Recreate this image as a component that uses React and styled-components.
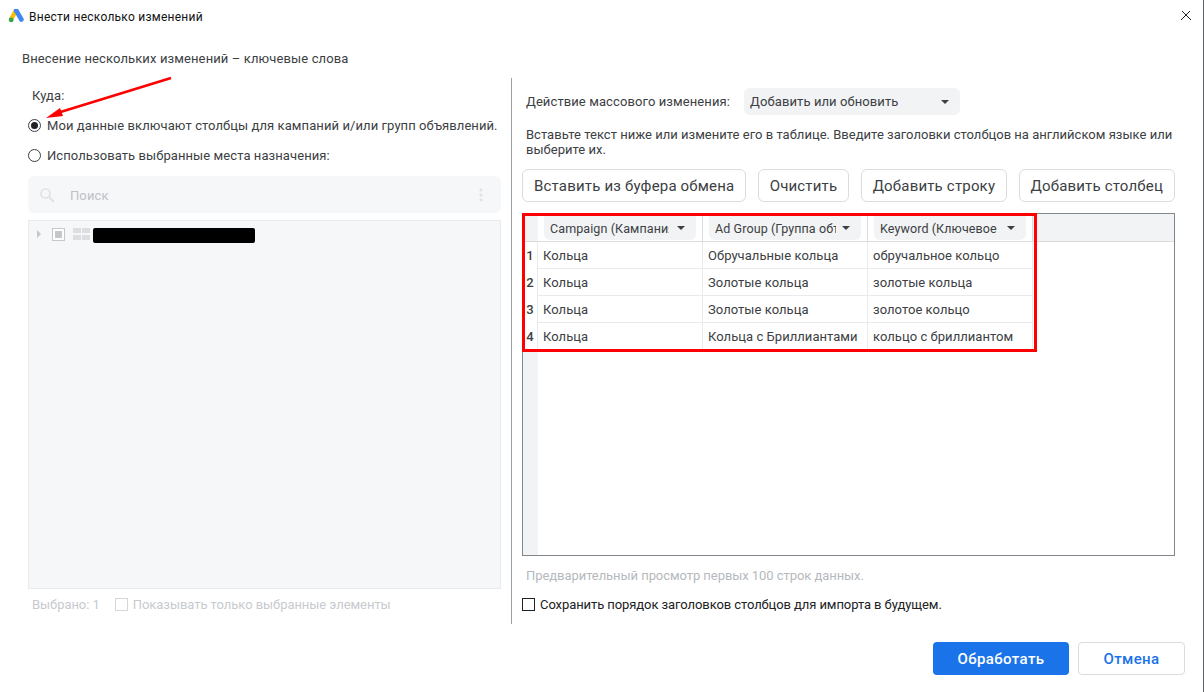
import React from "react";
import styled, { createGlobalStyle } from "styled-components";

const Global = createGlobalStyle`
  html, body { margin: 0; padding: 0; background: #fff; }
  body { font-family: Roboto, "Noto Sans", sans-serif; font-size: 13px; letter-spacing: 0.1px; color: #3c4043; }
  * { box-sizing: border-box; }
`;

const Page = styled.div`
  position: relative;
  width: 1204px;
  height: 692px;
  overflow: hidden;
  background: #fff;
  display: flex;
  flex-direction: column;
  border-right: 1px solid #5f6368;
`;

const TitleBar = styled.div`
  height: 34px;
  display: flex;
  align-items: center;
  padding: 0 11px 0 8px;
  gap: 5px;
  flex: none;
`;
const TitleText = styled.div`
  flex: 1;
  font-size: 12px;
  letter-spacing: 0.25px;
  color: #111;
`;
const Heading = styled.div`
  height: 20px;
  line-height: 20px;
  margin: 15px 0 9px 22px;
  letter-spacing: 0.12px;
  flex: none;
`;
const Columns = styled.div`
  display: flex;
  height: 546px;
  flex: none;
  padding-left: 28px;
`;
const LeftCol = styled.div`
  width: 484px;
  padding-right: 10px;
  border-right: 1px solid #9aa0a6;
  display: flex;
  flex-direction: column;
`;
const RightCol = styled.div`
  flex: 1;
  padding: 0 28px 0 10px;
  display: flex;
  flex-direction: column;
`;
const ToLabel = styled.div`
  margin: 10px 0 0 4px;
  height: 16px;
  line-height: 16px;
`;
const RadioRow = styled.div`
  display: flex;
  align-items: center;
  gap: 6px;
  height: 20px;
  margin-top: ${(p) => p.$mt}px;
  letter-spacing: 0.085px;
  white-space: nowrap;
`;
const Radio = styled.span`
  width: 13px;
  height: 13px;
  border: 1px solid #3c4043;
  border-radius: 50%;
  background: #fff;
  display: flex;
  align-items: center;
  justify-content: center;
  &::after {
    content: "";
    width: 7px;
    height: 7px;
    border-radius: 50%;
    background: ${(p) => (p.$on ? "#202124" : "transparent")};
  }
`;
const SearchBox = styled.div`
  height: 37px;
  margin-top: 11px;
  background: #f6f7f9;
  border-radius: 6px;
  display: flex;
  align-items: center;
  padding: 0 18px 0 11px;
  color: #bdc1c6;
`;
const SearchLabel = styled.span`
  flex: 1;
  margin-left: 15px;
  padding-top: 2px;
`;
const Tree = styled.div`
  height: 369px;
  margin-top: 7px;
  background: #f6f7f9;
  border: 1px solid #e8eaed;
  display: flex;
  align-items: flex-start;
  padding: 7px 0 0 8px;
  gap: 8px;
`;
const Caret = styled.span`
  width: 0;
  height: 0;
  margin-top: 2px;
  border-left: 4px solid #c4c7cc;
  border-top: 4px solid transparent;
  border-bottom: 4px solid transparent;
`;
const TreeCheck = styled.span`
  width: 13px;
  height: 13px;
  border: 1px solid #c4c7cc;
  background: #fff;
  display: flex;
  align-items: center;
  justify-content: center;
  margin-left: 3px;
  &::after {
    content: "";
    width: 7px;
    height: 7px;
    background: #c4c7cc;
  }
`;
const Redacted = styled.span`
  width: 162px;
  height: 15px;
  margin-left: -5px;
  background: #000;
  border-radius: 2px;
`;
const Selected = styled.div`
  display: flex;
  align-items: center;
  margin: 7px 0 0 4px;
  height: 16px;
  color: #c7cacf;
  letter-spacing: -0.05px;
`;
const SmallCheck = styled.span`
  width: 13px;
  height: 13px;
  margin: 0 5px 0 ${(p) => p.$ml}px;
  border: 1px solid ${(p) => p.$c};
  flex: none;
`;
const ActionRow = styled.div`
  display: flex;
  align-items: center;
  margin: 10px 0 0 4px;
  height: 27px;
`;
const Select = styled.div`
  width: 216px;
  height: 27px;
  margin-left: 14px;
  background: #f1f3f4;
  border-radius: 6px;
  display: flex;
  align-items: center;
  justify-content: space-between;
  padding: 0 11px 0 6px;
`;
const Arrow = styled.span`
  width: 0;
  height: 0;
  flex: none;
  border-top: 4px solid #3c4043;
  border-left: 4px solid transparent;
  border-right: 4px solid transparent;
`;
const Help = styled.div`
  margin: 12px 0 0 4px;
  line-height: 15px;
  letter-spacing: 0.02px;
`;
const Buttons = styled.div`
  display: flex;
  justify-content: space-between;
  margin-top: 12px;
`;
const Button = styled.button`
  height: 33px;
  padding: 0 11px;
  border: 1px solid #dadce0;
  border-radius: 6px;
  background: #fff;
  font: 15px Roboto, sans-serif;
  letter-spacing: 0.18px;
  color: #3c4043;
  white-space: nowrap;
`;
const Sheet = styled.div`
  margin-top: 11px;
  height: 343px;
  border: 1px solid #80868b;
  display: flex;
  flex-direction: column;
`;
const SheetHead = styled.div`
  height: 28px;
  flex: none;
  display: flex;
  background: #f1f3f4;
  border-bottom: 1px solid #dadce0;
  padding-left: 15px;
`;
const HeadCell = styled.div`
  width: 165px;
  background: #fff;
  border-right: 1px solid #dadce0;
  padding: 0 6px;
`;
const HeadSelect = styled.div`
  height: 26px;
  background: #f1f3f4;
  border-radius: 0 0 6px 6px;
  display: flex;
  align-items: center;
  justify-content: space-between;
  padding: 2px 11px 0 6px;
`;
const HeadText = styled.span`
  width: ${(p) => p.$w}px;
  overflow: hidden;
  white-space: nowrap;
  font-size: 12.5px;
`;
const SheetBody = styled.div`
  flex: 1;
  display: flex;
  flex-direction: column;
  background: linear-gradient(90deg, #f1f3f4 15px, #fff 15px);
`;
const Row = styled.div`
  display: flex;
  height: 27px;
`;
const RowNum = styled.div`
  width: 15px;
  line-height: 27px;
  text-align: center;
  font-weight: 500;
  font-size: 13px;
  background: #fff;
  border-right: 1px solid #e8eaed;
`;
const Cell = styled.div`
  width: 165px;
  padding-left: 5px;
  line-height: 28px;
  letter-spacing: 0.05px;
  border-right: 1px solid #e8eaed;
  border-bottom: 1px solid #e8eaed;
  white-space: nowrap;
  background: #fff;
`;
const Preview = styled.div`
  margin: 12px 0 0 4px;
  height: 16px;
  line-height: 16px;
  color: #b5b9be;
  letter-spacing: -0.06px;
`;
const SaveRow = styled.div`
  display: flex;
  align-items: center;
  margin-top: 12px;
  height: 16px;
  color: #202124;
  letter-spacing: -0.08px;
`;
const Footer = styled.div`
  display: flex;
  justify-content: flex-end;
  gap: 9px;
  padding: 18px 18px 0 0;
`;
const Primary = styled.button`
  width: 136px;
  height: 33px;
  border: 0;
  border-radius: 4px;
  background: #1a73e8;
  color: #fff;
  font: 500 15px Roboto, sans-serif;
  letter-spacing: 0.4px;
`;
const Cancel = styled.button`
  width: 107px;
  height: 33px;
  border: 1px solid #dadce0;
  border-radius: 4px;
  background: #fff;
  color: #1a73e8;
  font: 500 15px Roboto, sans-serif;
  letter-spacing: 0.4px;
`;
const Highlight = styled.div`
  position: absolute;
  left: 522px;
  top: 213px;
  width: 515px;
  height: 139px;
  border: 3px solid #f00;
  pointer-events: none;
`;
const Pointer = styled.svg`
  position: absolute;
  left: 40px;
  top: 70px;
  pointer-events: none;
`;

const rows = [
  ["Кольца", "Обручальные кольца", "обручальное кольцо"],
  ["Кольца", "Золотые кольца", "золотые кольца"],
  ["Кольца", "Золотые кольца", "золотое кольцо"],
  ["Кольца", "Кольца с Бриллиантами", "кольцо с бриллиантом"],
];

export default function App() {
  return (
    <Page>
      <Global />
      <TitleBar>
        <svg width="16" height="16" viewBox="0 1.5 16 16">
          <path d="M8 3 3 12" stroke="#fbbc04" strokeWidth="4.4" strokeLinecap="round" fill="none" />
          <path d="M8.2 3 13.4 12" stroke="#4285f4" strokeWidth="4.6" strokeLinecap="round" fill="none" />
          <circle cx="3.2" cy="12.4" r="2.4" fill="#34a853" />
        </svg>
        <TitleText>Внести несколько изменений</TitleText>
        <svg width="12" height="12" viewBox="0 2 12 12">
          <path d="M1 1 11 11M11 1 1 11" stroke="#222" strokeWidth="1" fill="none" />
        </svg>
      </TitleBar>
      <Heading>Внесение нескольких изменений – ключевые слова</Heading>
      <Columns>
        <LeftCol>
          <ToLabel>Куда:</ToLabel>
          <RadioRow $mt={11}>
            <Radio $on />
            Мои данные включают столбцы для кампаний и/или групп объявлений.
          </RadioRow>
          <RadioRow $mt={10}>
            <Radio />
            Использовать выбранные места назначения:
          </RadioRow>
          <SearchBox>
            <svg width="16" height="16" viewBox="0 0 16 16">
              <circle cx="6.5" cy="6.5" r="4.5" stroke="#dfe1e5" strokeWidth="1.6" fill="none" />
              <path d="M10 10 15 15" stroke="#dfe1e5" strokeWidth="1.8" />
            </svg>
            <SearchLabel>Поиск</SearchLabel>
            <svg width="4" height="14" viewBox="0 0 4 14">
              <circle cx="2" cy="2" r="1.6" fill="#dfe1e5" />
              <circle cx="2" cy="7" r="1.6" fill="#dfe1e5" />
              <circle cx="2" cy="12" r="1.6" fill="#dfe1e5" />
            </svg>
          </SearchBox>
          <Tree>
            <Caret />
            <TreeCheck />
            <svg width="17" height="12" viewBox="0 0 17 12">
              <rect width="8" height="5" fill="#dcdee1" />
              <rect x="9" width="8" height="5" fill="#dcdee1" />
              <rect y="7" width="8" height="5" fill="#dcdee1" />
              <rect x="9" y="7" width="8" height="5" fill="#dcdee1" />
            </svg>
            <Redacted />
          </Tree>
          <Selected>
            Выбрано: 1
            <SmallCheck $c="#d5d7da" $ml={15} />
            Показывать только выбранные элементы
          </Selected>
        </LeftCol>
        <RightCol>
          <ActionRow>
            Действие массового изменения:
            <Select>
              Добавить или обновить
              <Arrow />
            </Select>
          </ActionRow>
          <Help>
            Вставьте текст ниже или измените его в таблице. Введите заголовки столбцов на английском языке или выберите их.
          </Help>
          <Buttons>
            <Button>Вставить из буфера обмена</Button>
            <Button>Очистить</Button>
            <Button>Добавить строку</Button>
            <Button>Добавить столбец</Button>
          </Buttons>
          <Sheet>
            <SheetHead>
              <HeadCell>
                <HeadSelect>
                  <HeadText $w={119}>Campaign (Кампания)</HeadText>
                  <Arrow />
                </HeadSelect>
              </HeadCell>
              <HeadCell>
                <HeadSelect>
                  <HeadText $w={121}>Ad Group (Группа объявлений)</HeadText>
                  <Arrow />
                </HeadSelect>
              </HeadCell>
              <HeadCell>
                <HeadSelect>
                  <HeadText $w={119}>Keyword (Ключевое слово)</HeadText>
                  <Arrow />
                </HeadSelect>
              </HeadCell>
            </SheetHead>
            <SheetBody>
              {rows.map((r, i) => (
                <Row key={i}>
                  <RowNum>{i + 1}</RowNum>
                  {r.map((c, j) => (
                    <Cell key={j}>{c}</Cell>
                  ))}
                </Row>
              ))}
            </SheetBody>
          </Sheet>
          <Preview>Предварительный просмотр первых 100 строк данных.</Preview>
          <SaveRow>
            <SmallCheck $c="#202124" $ml={0} />
            Сохранить порядок заголовков столбцов для импорта в будущем.
          </SaveRow>
        </RightCol>
      </Columns>
      <Footer>
        <Primary>Обработать</Primary>
        <Cancel>Отмена</Cancel>
      </Footer>
      <Highlight />
      <Pointer width="140" height="60" viewBox="0 0 140 60">
        <path d="M131 8 14 44" stroke="#f00" strokeWidth="2.4" fill="none" />
        <path d="M6 48 20 38 23 46Z" fill="#f00" />
      </Pointer>
    </Page>
  );
}
